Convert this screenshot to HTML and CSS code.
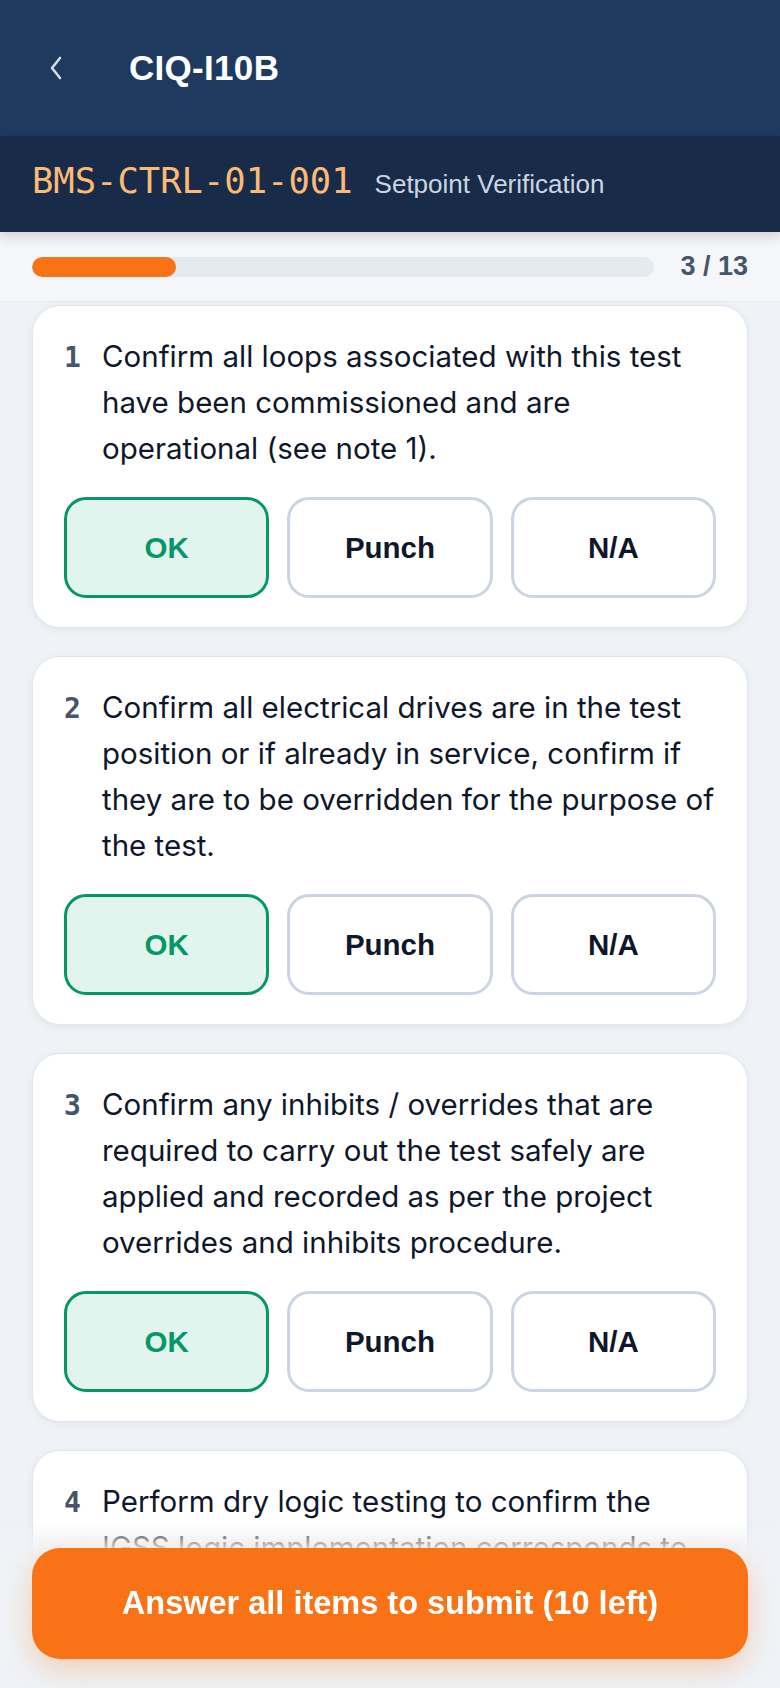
FILE: index.html
```html
<!DOCTYPE html>
<html lang="en">
<head>
    <meta charset="UTF-8">
    <meta name="viewport" content="width=device-width, initial-scale=1.0">
    <title>CIQ-I10B</title>
    <link rel="stylesheet" href="styles.css">
</head>
<body>
    <header class="topbar">
        <button class="back-btn" aria-label="Back">
            <svg width="14" height="24" viewBox="0 0 14 24">
                <polyline points="11,2 3,12 11,22" fill="none" stroke="#d5dce6" stroke-width="2.6" stroke-linecap="round" stroke-linejoin="round"/>
            </svg>
        </button>
        <h1 class="title">CIQ-I10B</h1>
    </header>

    <div class="subbar">
        <span class="tag-code">BMS-CTRL-01-001</span>
        <span class="tag-name">Setpoint Verification</span>
    </div>

    <div class="progress-row">
        <div class="progress-track">
            <div class="progress-fill" style="width: 23.08%;"></div>
        </div>
        <span class="progress-count">3 / 13</span>
    </div>

    <main class="items">
        <section class="item-card">
            <div class="item-head">
                <span class="item-num">1</span>
                <p class="item-text">Confirm all loops associated with this test have been commissioned and are operational (see note 1).</p>
            </div>
            <div class="choices">
                <button class="choice selected">OK</button>
                <button class="choice">Punch</button>
                <button class="choice">N/A</button>
            </div>
        </section>

        <section class="item-card">
            <div class="item-head">
                <span class="item-num">2</span>
                <p class="item-text">Confirm all electrical drives are in the test position or if already in service, confirm if they are to be overridden for the purpose of the test.</p>
            </div>
            <div class="choices">
                <button class="choice selected">OK</button>
                <button class="choice">Punch</button>
                <button class="choice">N/A</button>
            </div>
        </section>

        <section class="item-card">
            <div class="item-head">
                <span class="item-num">3</span>
                <p class="item-text">Confirm any inhibits / overrides that are required to carry out the test safely are applied and recorded as per the project overrides and inhibits procedure.</p>
            </div>
            <div class="choices">
                <button class="choice selected">OK</button>
                <button class="choice">Punch</button>
                <button class="choice">N/A</button>
            </div>
        </section>

        <section class="item-card">
            <div class="item-head">
                <span class="item-num">4</span>
                <p class="item-text">Perform dry logic testing to confirm the IGSS logic implementation corresponds to the approved cause and effect matrix.</p>
            </div>
        </section>
    </main>

    <footer class="submit-bar">
        <button class="submit-btn">Answer all items to submit (10 left)</button>
    </footer>
</body>
</html>
```

FILE: styles.css
```css
body {
    margin: 0;
    font-family: Inter, "Liberation Sans", sans-serif;
    background-color: #eff2f6;
    color: #0f172a;
}
button {
    font-family: inherit;
    cursor: pointer;
}

/* header */
.topbar {
    display: flex;
    align-items: center;
    height: 136px;
    padding: 0 32px;
    background-color: #1f3a5f;
}
.back-btn {
    display: flex;
    align-items: center;
    justify-content: center;
    width: 48px;
    height: 48px;
    margin-right: 49px;
    padding: 0;
    background: none;
    border: none;
}
.title {
    margin: 0;
    font-family: "Liberation Sans", Arial, sans-serif;
    font-size: 35px;
    font-weight: 700;
    letter-spacing: 0.3px;
    color: #ffffff;
}
.subbar {
    position: relative;
    z-index: 2;
    display: flex;
    align-items: baseline;
    gap: 22px;
    height: 90px;
    padding: 0 32px 6px;
    line-height: 90px;
    background-color: #182b49;
    box-shadow: 0 4px 12px rgba(15, 23, 42, 0.18);
}
.tag-code {
    font-family: "DejaVu Sans Mono", monospace;
    font-size: 35.5px;
    color: #fdba74;
}
.tag-name {
    font-family: "Liberation Sans", Arial, sans-serif;
    font-size: 26px;
    color: #cbd5e1;
}

/* progress */
.progress-row {
    position: relative;
    z-index: 1;
    display: flex;
    align-items: center;
    gap: 26px;
    height: 69px;
    padding: 0 32px;
    background-color: #f4f6f9;
    border-bottom: 1px solid #e4e9f0;
}
.progress-track {
    flex: 1;
    height: 20px;
    border-radius: 10px;
    background-color: #e5eaf1;
    overflow: hidden;
}
.progress-fill {
    height: 100%;
    border-radius: 10px;
    background-color: #f97316;
}
.progress-count {
    font-family: "Liberation Sans", Arial, sans-serif;
    font-size: 27px;
    font-weight: 700;
    color: #475569;
}

/* checklist items */
.items {
    display: flex;
    flex-direction: column;
    gap: 28px;
    padding: 3px 32px 200px;
}
.item-card {
    padding: 27px 31px 29px;
    background-color: #ffffff;
    border: 1px solid #e0e6ee;
    border-radius: 28px;
    box-shadow: 0 2px 8px rgba(15, 23, 42, 0.06);
}
.item-head {
    display: flex;
    align-items: baseline;
}
.item-num {
    flex: 0 0 38px;
    font-family: "DejaVu Sans Mono", monospace;
    font-size: 28px;
    font-weight: 700;
    color: #475569;
}
.item-text {
    flex: 1;
    margin: 0 -2px 0 0;
    font-size: 29.5px;
    line-height: 46px;
    color: #0f172a;
}
.choices {
    display: grid;
    grid-template-columns: repeat(3, 1fr);
    gap: 18px;
    margin-top: 26px;
}
.choice {
    height: 101px;
    font-family: "Liberation Sans", Arial, sans-serif;
    font-size: 29.5px;
    font-weight: 700;
    color: #0f172a;
    background-color: #ffffff;
    border: 3px solid #cbd5e1;
    border-radius: 22px;
}
.choice.selected {
    color: #059669;
    background-color: #e1f4ed;
    border-color: #059669;
}

/* submit */
.submit-bar {
    position: fixed;
    left: 0;
    right: 0;
    bottom: 0;
    padding: 28px 32px 29px;
    background: linear-gradient(to bottom, rgba(239, 242, 246, 0) 0, rgba(239, 242, 246, 0.85) 28px, #eff2f6 70px);
}
.submit-btn {
    width: 100%;
    height: 111px;
    font-family: "Liberation Sans", Arial, sans-serif;
    font-size: 32.5px;
    font-weight: 700;
    color: #ffffff;
    background-color: #f97316;
    border: none;
    border-radius: 28px;
    box-shadow: 0 10px 28px rgba(249, 115, 22, 0.28);
}
```
